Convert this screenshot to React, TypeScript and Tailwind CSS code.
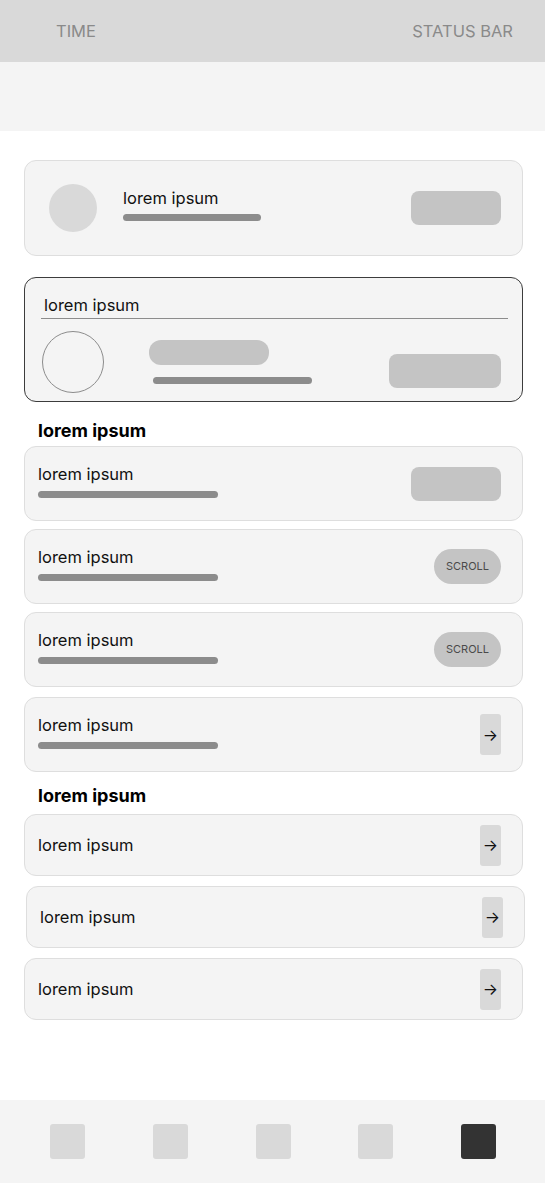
import React from "react";

type Trailing = "button" | "scroll" | "arrow";

function ArrowChip() {
  return (
    <div className="flex h-[41px] w-[21px] items-center justify-center rounded-[3px] bg-[#d9d9d9] text-[16px] leading-none text-[#111]">
      →
    </div>
  );
}

function Trail({ kind }: { kind: Trailing }) {
  if (kind === "button") return <div className="h-[34px] w-[90px] rounded-lg bg-[#c4c4c4]" />;
  if (kind === "scroll")
    return (
      <div className="flex h-[35px] w-[67px] items-center justify-center rounded-full bg-[#c4c4c4] text-[11px] text-[#4a4a4a]">
        SCROLL
      </div>
    );
  return <ArrowChip />;
}

function BarRow({ trail, className }: { trail: Trailing; className?: string }) {
  return (
    <div
      className={`ml-[24px] flex h-[75px] w-[499px] items-center justify-between rounded-xl border border-[#dedede] bg-[#f4f4f4] pl-[13px] pr-[21px] ${className ?? ""}`}
    >
      <div className="mb-[8px] flex flex-col">
        <span className="text-[16.5px] leading-6 text-[#111]">lorem ipsum</span>
        <div className="mt-[5px] h-[7px] w-[180px] rounded-full bg-[#8c8c8c]" />
      </div>
      <Trail kind={trail} />
    </div>
  );
}

function LinkRow({ className }: { className?: string }) {
  return (
    <div
      className={`flex h-[62px] w-[499px] items-center justify-between rounded-xl border border-[#dedede] bg-[#f4f4f4] pl-[13px] pr-[21px] ${className ?? ""}`}
    >
      <span className="text-[16.5px] leading-6 text-[#111]">lorem ipsum</span>
      <ArrowChip />
    </div>
  );
}

export default function App() {
  return (
    <div
      className="flex h-[1183px] w-[545px] flex-col bg-white"
      style={{ fontFamily: "Inter, 'Noto Sans', sans-serif" }}
    >
      {/* status bar */}
      <div className="flex h-[62px] items-center justify-between bg-[#d9d9d9] pl-[56px] pr-[32px] text-[16.5px] text-[#8a8a8a]">
        <span>TIME</span>
        <span>STATUS BAR</span>
      </div>
      <div className="h-[69px] bg-[#f4f4f4]" />

      <main className="flex-1">
        {/* profile card */}
        <div className="ml-[24px] mt-[29px] flex h-[96px] w-[499px] items-center rounded-xl border border-[#dedede] bg-[#f4f4f4] pl-[24px] pr-[21px]">
          <div className="h-[48px] w-[48px] rounded-full bg-[#d9d9d9]" />
          <div className="mb-[10px] ml-[26px] flex flex-col">
            <span className="text-[16.5px] leading-6 text-[#111]">lorem ipsum</span>
            <div className="mt-[4px] h-[7px] w-[138px] rounded-full bg-[#8c8c8c]" />
          </div>
          <div className="ml-auto h-[34px] w-[90px] rounded-lg bg-[#c4c4c4]" />
        </div>

        {/* selected card */}
        <div className="ml-[24px] mt-[21px] h-[125px] w-[499px] rounded-xl border-[1.5px] border-[#3c3c3c] bg-[#f4f4f4] pl-[16px] pr-[14px] pt-[15px]">
          <div className="pl-[3px] text-[16.5px] leading-[25px] text-[#111]">lorem ipsum</div>
          <div className="h-px bg-[#8c8c8c]" />
          <div className="flex items-start">
            <div className="ml-px mt-[12px] h-[62px] w-[62px] rounded-full border border-[#8c8c8c]" />
            <div className="ml-[45px] mt-[21px] flex flex-col">
              <div className="h-[25px] w-[120px] rounded-xl bg-[#c4c4c4]" />
              <div className="ml-[4px] mt-[12px] h-[7px] w-[159px] rounded-full bg-[#8c8c8c]" />
            </div>
            <div className="ml-auto mr-[7px] mt-[35px] h-[34px] w-[112px] rounded-lg bg-[#c4c4c4]" />
          </div>
        </div>

        <h2 className="ml-[38px] mt-[15px] text-[18px] font-bold leading-7 text-black">lorem ipsum</h2>
        <BarRow trail="button" className="mt-px" />
        <BarRow trail="scroll" className="mt-[8px]" />
        <BarRow trail="scroll" className="mt-[8px]" />
        <BarRow trail="arrow" className="mt-[10px]" />

        <h2 className="ml-[38px] mt-[10px] text-[18px] font-bold leading-7 text-black">lorem ipsum</h2>
        <LinkRow className="ml-[24px] mt-[4px]" />
        <LinkRow className="ml-[26px] mt-[10px]" />
        <LinkRow className="ml-[24px] mt-[10px]" />
      </main>

      {/* bottom nav */}
      <nav className="flex h-[83px] items-center justify-between bg-[#f4f4f4] pl-[50px] pr-[49px]">
        <div className="h-[35px] w-[35px] rounded-[3px] bg-[#d9d9d9]" />
        <div className="h-[35px] w-[35px] rounded-[3px] bg-[#d9d9d9]" />
        <div className="h-[35px] w-[35px] rounded-[3px] bg-[#d9d9d9]" />
        <div className="h-[35px] w-[35px] rounded-[3px] bg-[#d9d9d9]" />
        <div className="h-[35px] w-[35px] rounded-[3px] bg-[#333333]" />
      </nav>
    </div>
  );
}
